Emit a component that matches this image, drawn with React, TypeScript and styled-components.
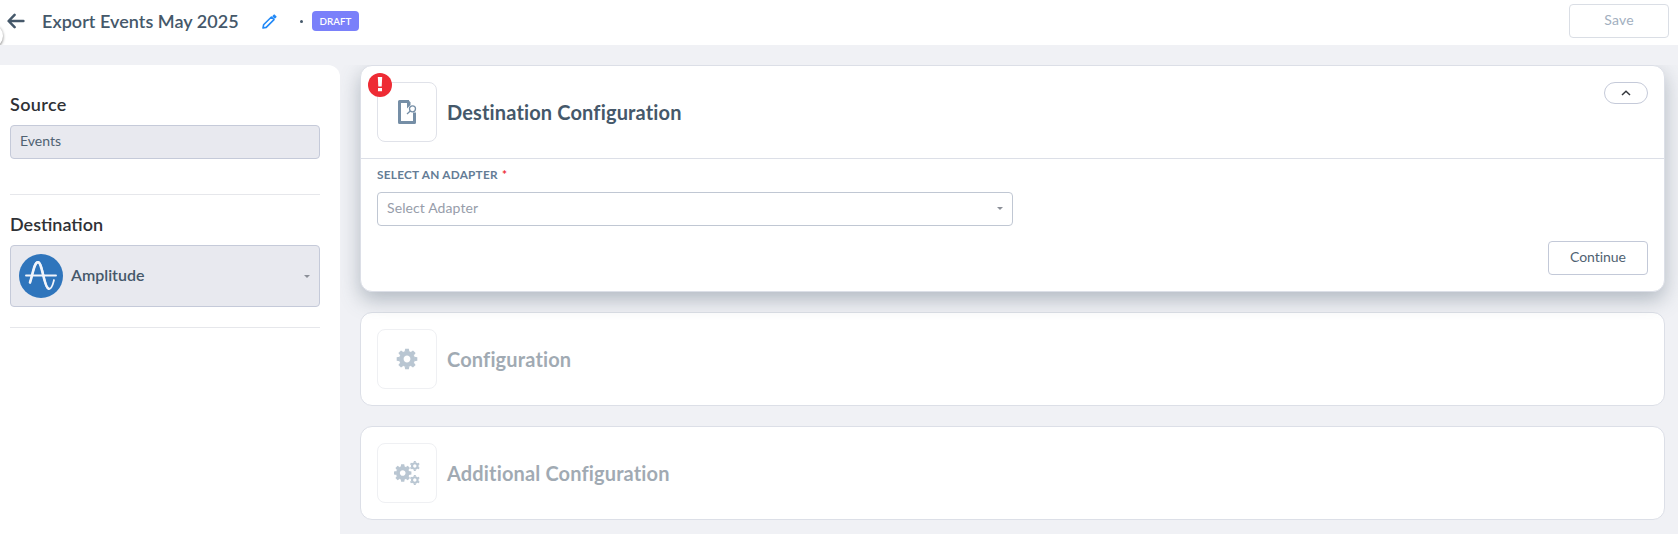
import React from "react";
import styled, { createGlobalStyle } from "styled-components";

const GlobalStyle = createGlobalStyle`
  *, *::before, *::after { box-sizing: border-box; }
  body {
    margin: 0;
    background: #f0f1f5;
    font-family: Lato, "Liberation Sans", sans-serif;
    color: #45586a;
    overflow: hidden;
  }
  svg { display: block; flex: none; }
`;

const Page = styled.div`
  height: 534px;
  display: flex;
  flex-direction: column;
  overflow: hidden;
`;

const Header = styled.header`
  position: relative;
  height: 45px;
  flex: none;
  background: #fff;
  display: flex;
  align-items: center;
  padding: 0 9px 3px 7px;
`;

const CollapseHandle = styled.span`
  position: absolute;
  left: -21px;
  top: 24px;
  width: 24px;
  height: 24px;
  border-radius: 50%;
  background: #fff;
  box-shadow: 0 1px 3px rgba(0, 0, 0, 0.5);
  clip-path: inset(-3px -4px 3px 0);
`;

const Title = styled.h1`
  margin: 0 0 0 17px;
  width: 220px;
  font-size: 18px;
  line-height: 24px;
  font-weight: 600;
  letter-spacing: 0.04px;
  white-space: nowrap;
`;

const Dot = styled.span`
  width: 3px;
  height: 3px;
  margin: 1px 9px 0 23px;
  border-radius: 50%;
  background: #45586a;
`;

const Badge = styled.span`
  width: 47px;
  height: 20px;
  border-radius: 4px;
  background: #7a80fa;
  color: #fff;
  font-size: 9.8px;
  line-height: 20px;
  font-weight: 600;
  text-align: center;
`;

const Button = styled.button<{ $muted?: boolean }>`
  width: 100px;
  height: 34px;
  margin-left: auto;
  padding: 0 0 3px;
  border: 1px solid ${(p) => (p.$muted ? "#dadee5" : "#c3c9d8")};
  border-radius: 4px;
  background: #fff;
  color: ${(p) => (p.$muted ? "#a2afc0" : "#4f6272")};
  font: 400 14px Lato, "Liberation Sans", sans-serif;
  letter-spacing: ${(p) => (p.$muted ? "0.2px" : "-0.05px")};
`;

const Body = styled.div`
  flex: 1;
  display: flex;
  padding-top: 20px;
`;

const Sidebar = styled.aside`
  width: 340px;
  flex: none;
  background: #fff;
  border-top-right-radius: 12px;
  padding: 27px 20px 0 10px;
`;

const SideHeading = styled.h2<{ $spacing: string }>`
  margin: 0 0 9px;
  font-size: 18px;
  line-height: 24px;
  font-weight: 600;
  letter-spacing: ${(p) => p.$spacing};
  color: #2f3136;
`;

const Field = styled.div<{ $tall?: boolean }>`
  height: ${(p) => (p.$tall ? 62 : 34)}px;
  display: flex;
  align-items: center;
  border: 1px solid #c5cad9;
  border-radius: 4px;
  background: #e8e9ef;
  padding: ${(p) => (p.$tall ? "0 9px 1px 8px" : "0 9px 4px")};
  font-size: 14px;
  color: #4f6272;
`;

const Divider = styled.hr<{ $above: number; $below: number }>`
  height: 1px;
  border: 0;
  background: #e6e7eb;
  margin: ${(p) => p.$above}px 0 ${(p) => p.$below}px;
`;

const AdapterName = styled.span`
  flex: 1;
  margin-left: 8px;
  padding-bottom: 3px;
  font-size: 16px;
  font-weight: 600;
  color: #45586a;
`;

const Caret = styled.span`
  margin-top: 2px;
  border: 3px solid transparent;
  border-top-color: #8b8f98;
  border-bottom: 0;
`;

const Main = styled.main`
  flex: 1;
  padding: 0 13px 0 20px;
  display: flex;
  flex-direction: column;
  gap: 20px;
`;

const Card = styled.section<{ $raised?: boolean }>`
  flex: none;
  border: 1px solid #dcdfe7;
  border-radius: 12px;
  background: #fff;
  box-shadow: ${(p) => (p.$raised ? "0 8px 20px rgba(69, 88, 106, 0.36)" : "none")};
  clip-path: ${(p) => (p.$raised ? "inset(0 -20px -28px -20px)" : "none")};
`;

const CardHeader = styled.div<{ $disabled?: boolean }>`
  position: relative;
  display: flex;
  align-items: center;
  padding: 16px;
  opacity: ${(p) => (p.$disabled ? 0.5 : 1)};
`;

const IconBox = styled.div`
  width: 60px;
  height: 60px;
  flex: none;
  border: 1px solid #e0e2e9;
  border-radius: 8px;
  display: grid;
  place-items: center;
`;

const Alert = styled.span`
  position: absolute;
  left: 7px;
  top: 7px;
`;

const CardTitle = styled.h2`
  margin: 0 0 0 10px;
  font-size: 20px;
  line-height: 26px;
  font-weight: 700;
  letter-spacing: 0.15px;
  white-space: nowrap;
`;

const Toggle = styled.button`
  width: 44px;
  height: 22px;
  padding: 0;
  margin-left: auto;
  align-self: flex-start;
  border: 1px solid #c5cad9;
  border-radius: 11px;
  background: #fff;
  display: grid;
  place-items: center;
`;

const CardBody = styled.div`
  border-top: 1px solid #dcdfe7;
  padding: 8px 16px 16px;
  display: flex;
  flex-direction: column;
`;

const Label = styled.label`
  display: block;
  height: 25px;
  font-size: 11.8px;
  line-height: 16px;
  font-weight: 700;
  letter-spacing: 0.25px;
  color: #647c95;
`;

const Required = styled.span`
  margin-left: 1px;
  color: #ee2b34;
`;

const Select = styled.div`
  width: 636px;
  height: 34px;
  margin-bottom: 15px;
  padding: 0 9px 3px;
  display: flex;
  align-items: center;
  justify-content: space-between;
  border: 1px solid #c0c7d3;
  border-radius: 4px;
  font-size: 14px;
  letter-spacing: 0.1px;
  color: #979daa;
`;

const Gear = ({ cx, cy, r, teeth = 8 }: { cx: number; cy: number; r: number; teeth?: number }) => (
  <g transform={`translate(${cx} ${cy}) scale(${r / 10})`} fill="#758ea6">
    <circle r="5.5" fill="none" stroke="#758ea6" strokeWidth="4.4" />
    {Array.from({ length: teeth }, (_, i) => (
      <path key={i} d="M-2.3 -7L-1.8 -10H1.8L2.3 -7Z" transform={`rotate(${(i * 360) / teeth})`} />
    ))}
  </g>
);

const BackArrow = () => (
  <svg width="18" height="16" viewBox="0 0 18 16" fill="none" stroke="#45586a" strokeWidth="2.5" strokeLinecap="round" strokeLinejoin="round">
    <path d="M16.4 8H2M7.6 1.8L1.6 8L7.6 14.2" />
  </svg>
);

const Pencil = () => (
  <svg width="15" height="15" viewBox="0 0 15 15" fill="none" stroke="#2289f7" strokeWidth="1.6" strokeLinejoin="round">
    <path d="M1 14L1.6 10.8L9.4 3L12 5.6L4.2 13.4Z" />
    <path d="M11.2 2.2L12.2 1.2L13.8 2.8L12.8 3.8Z" fill="#2289f7" />
  </svg>
);

const AmplitudeLogo = () => (
  <svg width="44" height="44" viewBox="0 0 44 44">
    <circle cx="22" cy="22" r="22" fill="#2f75bc" />
    <g fill="none" stroke="#f1f4fa" strokeLinecap="round" strokeLinejoin="round">
      <path d="M7 21.5H37" strokeWidth="1.9" />
      <path d="M11 28.5C14 20 15 8 19 8C24 8 25 35 30 35C33 35 34 30 35 26" strokeWidth="1.8" />
      <path d="M11 28.5C14 20 15 8.3 19 8.3C23.2 8.3 25 33.5 29.5 34.6" strokeWidth="2.6" />
    </g>
  </svg>
);

const DocumentIcon = () => (
  <svg width="20" height="26" viewBox="0 0 20 26" fill="none" stroke="#758ea6">
    <path d="M12 2.5H2.5V23.5H17.5V13.5" strokeWidth="3" strokeLinejoin="round" />
    <path d="M11.5 1L13.5 3.5V6L10 9.5V4Z" fill="#758ea6" stroke="none" />
    <circle cx="15.5" cy="9.8" r="3" strokeWidth="1.3" fill="#fff" />
    <path d="M13.3 12L10 15" strokeWidth="1.3" />
  </svg>
);

const AlertIcon = () => (
  <svg width="24" height="24" viewBox="0 0 24 24">
    <circle cx="12" cy="12" r="12" fill="#ee2b34" />
    <path d="M9.8 4H14.2L13.7 13.5H10.3ZM10 15H14V18.2H10Z" fill="#fff" />
  </svg>
);

export default function App() {
  return (
    <Page>
      <GlobalStyle />
      <Header>
        <CollapseHandle />
        <BackArrow />
        <Title>Export Events May 2025</Title>
        <Pencil />
        <Dot />
        <Badge>DRAFT</Badge>
        <Button $muted>Save</Button>
      </Header>
      <Body>
        <Sidebar>
          <SideHeading $spacing="0.35px">Source</SideHeading>
          <Field>Events</Field>
          <Divider $above={35} $below={17} />
          <SideHeading $spacing="0">Destination</SideHeading>
          <Field $tall>
            <AmplitudeLogo />
            <AdapterName>Amplitude</AdapterName>
            <Caret />
          </Field>
          <Divider $above={20} $below={0} />
        </Sidebar>
        <Main>
          <Card $raised>
            <CardHeader>
              <IconBox><DocumentIcon /></IconBox>
              <Alert><AlertIcon /></Alert>
              <CardTitle>Destination Configuration</CardTitle>
              <Toggle aria-label="Collapse">
                <svg width="10" height="6" viewBox="0 0 10 6" fill="none" stroke="#34373c" strokeWidth="1.5">
                  <path d="M1 5L5 1.2L9 5" />
                </svg>
              </Toggle>
            </CardHeader>
            <CardBody>
              <Label>SELECT AN ADAPTER <Required>*</Required></Label>
              <Select>Select Adapter<Caret /></Select>
              <Button>Continue</Button>
            </CardBody>
          </Card>
          <Card>
            <CardHeader $disabled>
              <IconBox>
                <svg width="22" height="22" viewBox="0 0 22 22"><Gear cx={11} cy={11} r={10.3} /></svg>
              </IconBox>
              <CardTitle>Configuration</CardTitle>
            </CardHeader>
          </Card>
          <Card>
            <CardHeader $disabled>
              <IconBox>
                <svg width="26" height="24" viewBox="0 0 26 24">
                  <Gear cx={8.7} cy={12} r={8.7} />
                  <Gear cx={20.8} cy={5} r={5} teeth={6} />
                  <Gear cx={20.8} cy={19} r={5} teeth={6} />
                </svg>
              </IconBox>
              <CardTitle>Additional Configuration</CardTitle>
            </CardHeader>
          </Card>
        </Main>
      </Body>
    </Page>
  );
}
